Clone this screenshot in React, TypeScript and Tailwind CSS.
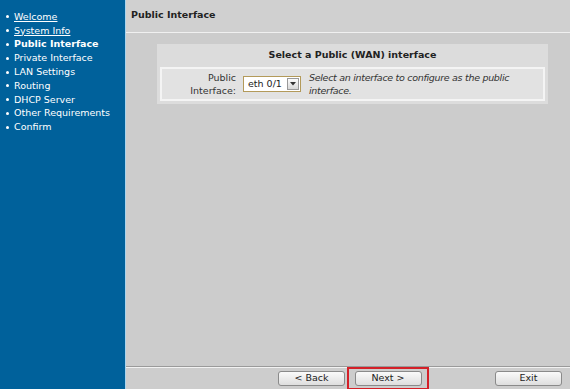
const steps = [
  { label: "Welcome", link: true },
  { label: "System Info", link: true },
  { label: "Public Interface", current: true },
  { label: "Private Interface" },
  { label: "LAN Settings" },
  { label: "Routing" },
  { label: "DHCP Server" },
  { label: "Other Requirements" },
  { label: "Confirm" },
];

function WizardButton({ children }: { children: React.ReactNode }) {
  return (
    <button className="h-[15px] w-[67px] rounded-[3px] border border-[#8a8a8a] bg-gradient-to-b from-[#fafafa] to-[#dedede] text-[9.5px] leading-none text-[#222]">
      {children}
    </button>
  );
}

export default function App() {
  return (
    <div
      className="flex h-[389px] w-[570px] overflow-hidden text-[9.5px]"
      style={{ fontFamily: '"DejaVu Sans", Verdana, sans-serif' }}
    >
      <div className="w-[125px] bg-[#00619b] pt-[10px] pl-[6px]">
        <ul className="flex flex-col">
          {steps.map((s) => (
            <li key={s.label} className="flex h-[13.8px] items-center text-[9.5px] text-white">
              <span className="mr-[5px] inline-block h-[3px] w-[3px] rounded-full bg-white" />
              <span
                className={
                  s.current ? "font-bold" : s.link ? "underline underline-offset-1" : ""
                }
              >
                {s.label}
              </span>
            </li>
          ))}
        </ul>
      </div>
      <div className="w-px bg-[#a9d4ee]" />
      <div className="flex flex-1 flex-col bg-[#cccccc]">
        <div className="flex h-[33px] items-center border-b border-[#f0f0f0] bg-[#d0d0d0] px-[5px] pb-[1px] text-[9.5px] font-bold text-[#222]">
          Public Interface
        </div>
        <div className="flex-1">
          <div className="ml-[31px] mt-[11px] w-[391px] bg-[#dcdcdc] px-[3px] pb-[3px]">
            <div className="flex h-[23px] items-center justify-center text-[9.5px] font-bold text-[#222]">
              Select a Public (WAN) interface
            </div>
            <div className="flex h-[34px] items-center border-2 border-[#f4f4f4] bg-[#e2e2e2]">
              <div className="w-[74px] text-right text-[9.5px] leading-[13px] text-[#333]">
                Public
                <br />
                Interface:
              </div>
              <div className="ml-[7px] flex h-[16px] w-[58px] items-center border border-[#b39a5a] bg-white pl-[4px] text-[9.5px] text-[#222]">
                <span className="flex-1">eth 0/1</span>
                <span className="mr-[1px] flex h-[12px] w-[12px] items-center justify-center border border-[#999] bg-gradient-to-b from-[#fcfcfc] to-[#d8d8d8]">
                  <svg width="6" height="4" viewBox="0 0 6 4">
                    <path d="M0 0h6L3 3.5z" fill="#333" />
                  </svg>
                </span>
              </div>
              <div className="ml-[8px] whitespace-nowrap text-[9.5px] italic leading-[13px] tracking-[-0.3px] text-[#333]">
                Select an interface to configure as the public
                <br />
                interface.
              </div>
            </div>
          </div>
        </div>
        <div className="flex h-[23px] items-center border-t border-[#9a9a9a] bg-[#cdcdcd] shadow-[inset_0_1px_0_#f2f2f2]">
          <div className="ml-[152px]">
            <WizardButton>&lt; Back</WizardButton>
          </div>
          <div className="ml-[2px] flex h-[23px] w-[82px] items-center justify-center border-2 border-[#d42028]">
            <WizardButton>Next &gt;</WizardButton>
          </div>
          <div className="ml-[66px]">
            <WizardButton>Exit</WizardButton>
          </div>
        </div>
      </div>
    </div>
  );
}
